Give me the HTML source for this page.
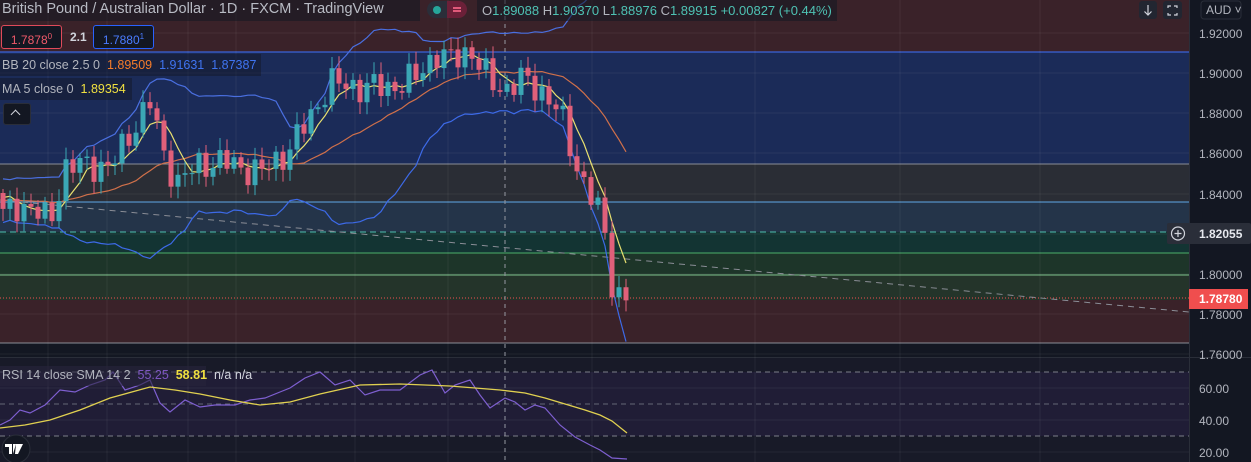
<!DOCTYPE html>
<html><head><meta charset="utf-8"><style>
html,body{margin:0;padding:0;background:#131722;width:1251px;height:462px;overflow:hidden;font-family:"Liberation Sans",sans-serif;}
#c{position:absolute;left:0;top:0}
.t{position:absolute;white-space:nowrap;font-size:13px;color:#b2b5be}
</style></head><body>
<svg id="c" width="1251" height="462" xmlns="http://www.w3.org/2000/svg">
<rect x="0" y="0" width="1251" height="462" fill="#131722"/>
<rect x="0" y="0" width="1189" height="52" fill="#3a2229"/>
<rect x="0" y="52" width="1189" height="112" fill="#1b2b58"/>
<rect x="0" y="164" width="1189" height="38" fill="#2a2d35"/>
<rect x="0" y="202" width="1189" height="30" fill="#243449"/>
<rect x="0" y="232" width="1189" height="21" fill="#133433"/>
<rect x="0" y="253" width="1189" height="22" fill="#1d3529"/>
<rect x="0" y="275" width="1189" height="25" fill="#24342a"/>
<rect x="0" y="300" width="1189" height="43" fill="#3a2229"/>
<rect x="0" y="358" width="1189" height="104" fill="#181a28"/>
<rect x="0" y="372" width="1189" height="64" fill="#201d36"/>
<line x1="0" y1="52" x2="1189" y2="52" stroke="#3b63d8" stroke-width="1.2"/>
<line x1="0" y1="164" x2="1189" y2="164" stroke="#8a8d96" stroke-width="1"/>
<line x1="0" y1="202" x2="1189" y2="202" stroke="#5fa8e6" stroke-width="1"/>
<line x1="0" y1="253" x2="1189" y2="253" stroke="#4caf6a" stroke-width="1"/>
<line x1="0" y1="275" x2="1189" y2="275" stroke="#7dc08a" stroke-width="1"/>
<line x1="0" y1="343" x2="1189" y2="343" stroke="#8a8d96" stroke-width="1"/>
<line x1="0" y1="232" x2="1170" y2="232" stroke="#4fc0b0" stroke-width="1" stroke-dasharray="6,4"/>
<line x1="0" y1="298" x2="1189" y2="298" stroke="#f05050" stroke-width="1" stroke-dasharray="1,2"/>
<line x1="0" y1="357.5" x2="1251" y2="357.5" stroke="#2a2e39" stroke-width="1"/>
<line x1="1189.5" y1="0" x2="1189.5" y2="462" stroke="#2a2e39" stroke-width="1"/>
<g id="grid" stroke="#ffffff" stroke-opacity="0.06"></g>
<line x1="0" y1="372" x2="1189" y2="372" stroke="#9598a1" stroke-dasharray="5,4" stroke-opacity="0.8"/>
<line x1="0" y1="404" x2="1189" y2="404" stroke="#9598a1" stroke-dasharray="5,4" stroke-opacity="0.6"/>
<line x1="0" y1="436" x2="1189" y2="436" stroke="#9598a1" stroke-dasharray="5,4" stroke-opacity="0.8"/>
<line x1="0" y1="200" x2="1189" y2="312" stroke="#8a8d96" stroke-dasharray="6,5"/>
<line x1="505" y1="0" x2="505" y2="462" stroke="#9598a1" stroke-dasharray="4,4"/>
<g id="lines"></g>
<g id="candles"></g>
<polyline fill="none" stroke="#7e5fd0" stroke-width="1.2" points="0,425 10,420 20,410 30,413 45,405 60,390 75,392 90,385 105,380 113,372 125,390 140,385 150,380 160,403 170,412 185,400 200,407 215,405 235,405 250,400 265,398 280,392 290,388 305,378 320,372 335,385 350,380 365,395 380,390 400,390 420,375 432,370 445,393 455,385 470,380 480,395 490,408 505,398 515,402 525,410 535,405 545,408 560,425 575,437 590,445 600,450 612,458 627,459"/>
<polyline fill="none" stroke="#e0d050" stroke-width="1.3" points="0,428 25,425 50,420 80,410 110,398 150,387 175,390 200,394 230,400 260,405 290,402 320,394 360,385 400,384 450,386 500,390 525,393 545,398 565,404 585,410 600,415 612,421 627,433"/>
<g font-family="Liberation Sans, sans-serif" font-size="12" fill="#b2b5be">
<text x="1199" y="38">1.92000</text>
<text x="1199" y="78">1.90000</text>
<text x="1199" y="118">1.88000</text>
<text x="1199" y="158">1.86000</text>
<text x="1199" y="199">1.84000</text>
<text x="1199" y="279">1.80000</text>
<text x="1199" y="319">1.78000</text>
<text x="1199" y="359">1.76000</text>
<text x="1199" y="393">60.00</text>
<text x="1199" y="425">40.00</text>
<text x="1199" y="457">20.00</text>
</g>
<rect x="1167" y="223" width="84" height="21" rx="2" fill="#2a2e39"/>
<circle cx="1178" cy="233.5" r="6.5" fill="none" stroke="#d1d4dc" stroke-width="1.2"/>
<path d="M1178 230v7M1174.5 233.5h7" stroke="#d1d4dc" stroke-width="1.2"/>
<text x="1199" y="238" font-size="12" font-weight="bold" fill="#e6e8ee" font-family="Liberation Sans, sans-serif">1.82055</text>
<rect x="1189" y="289" width="59" height="20" fill="#f04e4e"/>
<text x="1199" y="303" font-size="12" font-weight="bold" fill="#fff" font-family="Liberation Sans, sans-serif">1.78780</text>
<rect x="1139" y="1" width="18" height="18" rx="3" fill="#222631"/>
<path d="M1148 5v10M1144.5 11.5l3.5 3.5 3.5-3.5" stroke="#d1d4dc" stroke-width="1.2" fill="none"/>
<rect x="1163" y="1" width="19" height="18" rx="3" fill="#222631"/>
<path d="M1168 8v-2h3M1177 8v-2h-3M1168 13v2h3M1177 13v2h-3" stroke="#d1d4dc" stroke-width="1.2" fill="none"/>
<rect x="1201" y="1" width="40" height="18" rx="3" fill="#131722" stroke="#2a2e39"/>
<text x="1206" y="14" font-size="12" fill="#b2b5be" font-family="Liberation Sans, sans-serif">AUD ˅</text>
<circle cx="16" cy="449" r="14" fill="#131722" stroke="#2a2e39"/>
<path d="M5 444h7v10h-3v-7h-4zM13 444h3l-3 10zM16 444h7l-5 10h-3z" fill="#fff"/>
</svg>
<div class="t" style="left:0;top:0;height:21px;width:420px;background:rgba(19,23,34,0.55);"></div>
<div class="t" style="left:2px;top:1px;font-size:14.5px;color:#b8bbc4">British Pound / Australian Dollar · 1D · FXCM · TradingView</div>
<div style="position:absolute;left:427px;top:1px;width:40px;height:17px;border-radius:9px;background:#2a2e39"></div>
<div style="position:absolute;left:433px;top:6px;width:8px;height:8px;border-radius:4px;background:#26a69a"></div>
<div style="position:absolute;left:447px;top:1px;width:20px;height:17px;border-radius:0 9px 9px 0;background:#6b2038"></div>
<div style="position:absolute;left:453px;top:7px;width:8px;height:1.5px;background:#e05a7a;box-shadow:0 3px 0 #e05a7a"></div>
<div class="t" style="left:477px;top:0;height:21px;width:360px;background:rgba(19,23,34,0.55)"></div>
<div class="t" style="left:482px;top:3px;font-size:13px;color:#4ec2b4"><span style="color:#b2b5be">O</span>1.89088 <span style="color:#b2b5be">H</span>1.90370 <span style="color:#b2b5be">L</span>1.88976 <span style="color:#b2b5be">C</span>1.89915 +0.00827 (+0.44%)</div>
<div style="position:absolute;left:1px;top:25px;width:59px;height:22px;border:1px solid #e04a5a;border-radius:3px;background:#131722;color:#f05a6a;font-size:12px;line-height:22px;text-align:center">1.7878<sup style="font-size:8px">0</sup></div>
<div class="t" style="left:70px;top:30px;font-size:12px;color:#d1d4dc;font-weight:bold">2.1</div>
<div style="position:absolute;left:93px;top:25px;width:59px;height:22px;border:1px solid #2962ff;border-radius:3px;background:#131722;color:#4a7cff;font-size:12px;line-height:22px;text-align:center">1.7880<sup style="font-size:8px">1</sup></div>
<div class="t" style="left:0;top:54px;width:261px;height:22px;background:rgba(19,23,34,0.45)"></div>
<div class="t" style="left:2px;top:58px;font-size:12.5px">BB 20 close 2.5 0 &nbsp;<span style="color:#f57c2a">1.89509</span> &nbsp;<span style="color:#3f74f0">1.91631</span> &nbsp;<span style="color:#3f74f0">1.87387</span></div>
<div class="t" style="left:0;top:78px;width:132px;height:22px;background:rgba(19,23,34,0.45)"></div>
<div class="t" style="left:2px;top:82px;font-size:12.5px">MA 5 close 0 &nbsp;<span style="color:#f0e040">1.89354</span></div>
<div style="position:absolute;left:3px;top:103px;width:26px;height:20px;border-radius:3px;background:#131722;border:1px solid #2a2e39"></div>
<div style="position:absolute;left:12px;top:111px;width:6px;height:6px;border-left:1.5px solid #d1d4dc;border-top:1.5px solid #d1d4dc;transform:rotate(45deg)"></div>
<div class="t" style="left:0;top:366px;width:206px;height:20px;background:rgba(40,36,60,0.6)"></div>
<div class="t" style="left:2px;top:368px;font-size:12.5px">RSI 14 close SMA 14 2 &nbsp;<span style="color:#7e57c2">55.25</span> &nbsp;<span style="color:#f0e040;font-weight:bold">58.81</span> &nbsp;<span style="color:#d1d4dc">n/a n/a</span></div>
<script>
var NS="http://www.w3.org/2000/svg";
function el(p,t,a){var e=document.createElementNS(NS,t);for(var k in a)e.setAttribute(k,a[k]);p.appendChild(e);return e;}
var g=document.getElementById('grid');
[48,107,188,236,355,448,592,755,900,1040].forEach(function(x){el(g,'line',{x1:x,y1:0,x2:x,y2:462});});
[33,73,113,153,194,234,274,314,354,388,420,452].forEach(function(y){el(g,'line',{x1:0,y1:y,x2:1189,y2:y});});
var kp=[[0,1.828],[20,1.835],[50,1.826],[65,1.852],[90,1.855],[110,1.852],[130,1.87],[150,1.885],[165,1.858],[178,1.845],[200,1.855],[230,1.855],[260,1.85],[290,1.862],[310,1.878],[330,1.895],[360,1.893],[390,1.893],[415,1.897],[435,1.91],[450,1.906],[470,1.912],[490,1.895],[505,1.892],[520,1.897],[545,1.89],[560,1.88],[575,1.855],[590,1.84],[603,1.825],[612,1.795],[620,1.789],[628,1.789]];
function interp(x){for(var i=1;i<kp.length;i++){if(x<=kp[i][0]){var a=kp[i-1],b=kp[i];return a[1]+(b[1]-a[1])*(x-a[0])/(b[0]-a[0]);}}return kp[kp.length-1][1];}
function Y(p){return 33+(1.92-p)*2000;}
var N=90,cl=[],xs=[];
for(var i=0;i<N;i++){var x=3+i*7;xs.push(x);cl.push(interp(x)+0.006*Math.sin(i*2.3)+0.003*Math.cos(i*5.1));}
var pre=[];for(var i=0;i<25;i++)pre.push(1.84-0.0004*i+0.005*Math.sin(i*1.7));pre.reverse();
var all=pre.concat(cl),P=pre.length;
var cg=document.getElementById('candles');
for(var i=0;i<N;i++){var o=all[P+i-1],c=cl[i];var up=c>=o;var col=up?'#3ba7b5':'#e0607a';
var hi=Math.max(o,c)+0.002+0.004*Math.abs(Math.sin(i*3.7)),lo=Math.min(o,c)-0.002-0.004*Math.abs(Math.cos(i*2.9));
el(cg,'line',{x1:xs[i],y1:Y(hi),x2:xs[i],y2:Y(lo),stroke:col,'stroke-width':1});
var t=Y(Math.max(o,c)),h=Math.max(1,Math.abs(Y(o)-Y(c)));
el(cg,'rect',{x:xs[i]-2.5,y:t,width:5,height:h,fill:col});}
function sma(n,i){var s=0;for(var k=0;k<n;k++)s+=all[i-k];return s/n;}
function sd(n,i,m){var s=0;for(var k=0;k<n;k++)s+=(all[i-k]-m)*(all[i-k]-m);return Math.sqrt(s/n);}
var m5='',m20='',bu='',bl='';
for(var i=0;i<N;i++){var j=P+i,x=xs[i];var a=sma(5,j),b=sma(20,j),s=sd(20,j,b);
m5+=(i?'L':'M')+x+' '+Y(a).toFixed(1);m20+=(i?'L':'M')+x+' '+Y(b).toFixed(1);
bu+=(i?'L':'M')+x+' '+Y(b+2.5*s).toFixed(1);bl+=(i?'L':'M')+x+' '+Y(b-2.5*s).toFixed(1);}
var lg=document.getElementById('lines');
el(lg,'path',{d:bu,fill:'none',stroke:'#4a6fe0','stroke-width':1.2});
el(lg,'path',{d:bl,fill:'none',stroke:'#3d6ae8','stroke-width':1.2});
el(lg,'path',{d:m20,fill:'none',stroke:'#d0704a','stroke-width':1.2});
el(lg,'path',{d:m5,fill:'none',stroke:'#e8e070','stroke-width':1.2});
</script>
</body></html>
